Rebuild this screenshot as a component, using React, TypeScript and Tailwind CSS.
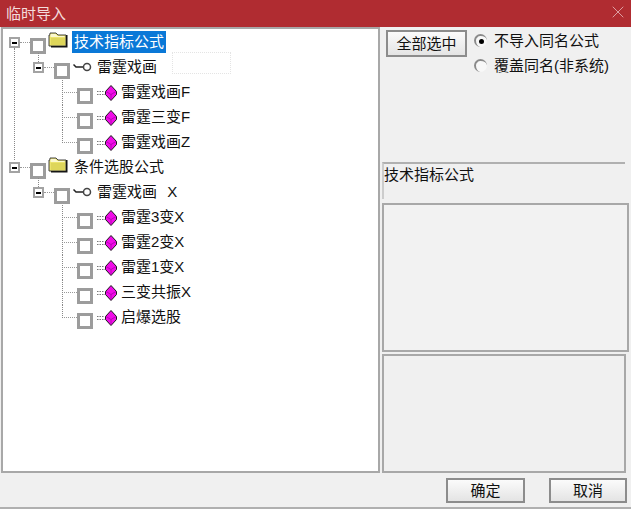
import { X } from "lucide-react"

const font = { fontFamily: '"Liberation Sans", "Noto Sans CJK SC", sans-serif' }

type Row = { level: 0 | 1 | 2; label: string; last?: boolean; selected?: boolean; editing?: boolean }

const rows: Row[] = [
  { level: 0, label: "技术指标公式", selected: true },
  { level: 1, label: "雷霆戏画", editing: true },
  { level: 2, label: "雷霆戏画F" },
  { level: 2, label: "雷霆三变F" },
  { level: 2, label: "雷霆戏画Z", last: true },
  { level: 0, label: "条件选股公式" },
  { level: 1, label: "雷霆戏画  X" },
  { level: 2, label: "雷霆3变X" },
  { level: 2, label: "雷霆2变X" },
  { level: 2, label: "雷霆1变X" },
  { level: 2, label: "三变共振X" },
  { level: 2, label: "启爆选股", last: true },
]

function Folder() {
  return (
    <svg width="20" height="18" viewBox="0 0 20 18" className="shrink-0">
      <path d="M1 15V4h1V2h6l2 2h8v11z" fill="#ece46c" stroke="#444" strokeWidth="1" />
      <path d="M2.500 3h5l2 2h7v1h-14z" fill="#fbf8d0" />
      <path d="M18 4h1.500v12.500H3V15h15z" fill="#151515" />
      <path d="M3 7h14v7H3z" fill="#ded65a" />
    </svg>
  )
}

function Key() {
  return (
    <svg width="19" height="12" viewBox="0 0 19 12" className="shrink-0">
      <path d="M0.500 3.500L3 6H10.500" stroke="#222" strokeWidth="1.5" fill="none" />
      <circle cx="14" cy="6" r="3.500" fill="#fff" stroke="#444" strokeWidth="1.500" />
    </svg>
  )
}

function Gem() {
  return (
    <svg width="22" height="16" viewBox="0 0 22 16" className="shrink-0">
      <path d="M1 6.500h7M1 9.500h8" stroke="#777" strokeWidth="1" strokeDasharray="1.500 1" />
      <path d="M15 0.500l5.500 6v3L15 15.500 9.500 9.500v-3z" fill="#f00ce8" stroke="#1a1a1a" strokeWidth="1" />
      <path d="M10 6.500l5 3 5-3M15 9.500v5.500" stroke="#a000a0" strokeWidth="0.7" fill="none" />
    </svg>
  )
}

function Expander() {
  return (
    <div className="w-[11px] h-[11px] border-2 border-[#a3a3a3] bg-white flex items-center justify-center shrink-0">
      <div className="w-[5px] h-[2px] bg-black" />
    </div>
  )
}

function Check() {
  return <div className="w-[16px] h-[16px] border-[3px] border-[#9c9c9c] bg-white shrink-0" />
}

function TreeRow({ row }: { row: Row }) {
  if (row.level === 0) {
    return (
      <div className="relative flex items-center h-[25px] pl-[6px]">
        <Expander />
        <div className="w-[10px] border-t border-dotted border-[#999]" />
        <div className="mt-[6px] shrink-0"><Check /></div>
        <div className="ml-[2px] -mt-[6px]"><Folder /></div>
        <span className={`ml-[4px] h-[22px] px-[2px] -mt-[1px] leading-[22px] text-[15px] ${row.selected ? "bg-[#0a78d7] text-white" : "text-[#111]"}`}>
          {row.label}
        </span>
        {row.selected ? <div className="absolute left-[11px] top-[18px] h-[112px] border-l border-dotted border-[#888]" /> : null}
        <div className="absolute left-[35px] top-[23px] h-[9px] border-l border-dotted border-[#888]" />
      </div>
    )
  }
  if (row.level === 1) {
    return (
      <div className="relative flex items-center h-[25px] pl-[30px]">
        <Expander />
        <div className="w-[10px] border-t border-dotted border-[#999]" />
        <div className="mt-[6px]"><Check /></div>
        <div className="ml-[3px] -mt-[2px]"><Key /></div>
        <span className="ml-[5px] -mt-[1px] text-[15px] text-[#111] whitespace-pre [word-spacing:1px] leading-[22px]">{row.label}</span>
        {row.editing ? <div className="absolute left-[169px] top-[-3px] w-[59px] h-[22px] border border-dotted border-[#e4e4e4]" /> : null}
      </div>
    )
  }
  return (
    <div className="relative flex items-center h-[25px] pl-[59px]">
      <div className={`absolute left-[59px] top-0 border-l border-dotted border-[#888] ${row.last ? "h-[13px]" : "h-[25px]"}`} />
      <div className="w-[15px] border-t border-dotted border-[#999]" />
      <div className="mt-[6px]"><Check /></div>
      <div className="ml-[3px]"><Gem /></div>
      <span className="ml-[3px] -mt-[1px] text-[15px] text-[#111] leading-[22px]">{row.label}</span>
    </div>
  )
}

function Radio({ on, label }: { on?: boolean; label: string }) {
  return (
    <div className="flex items-center h-[25px]">
      <div className="w-[13px] h-[13px] rounded-full border-l-2 border-t-2 border-[#8a8a8a] bg-[#f8f8f8] flex items-center justify-center shrink-0">
        {on ? <div className="w-[5px] h-[5px] rounded-full bg-black" /> : null}
      </div>
      <span className="ml-[7px] text-[15px] text-[#111] leading-[22px] whitespace-nowrap">{label}</span>
    </div>
  )
}

function Btn({ label, className }: { label: string; className: string }) {
  return (
    <button className={`border-2 border-[#8c8c8c] bg-gradient-to-b from-[#fbfbfb] to-[#e4e4e4] text-[15px] text-[#111] leading-none flex items-center justify-center ${className}`}>
      {label}
    </button>
  )
}

export default function App() {
  return (
    <div className="w-[631px] h-[509px] flex flex-col bg-[#f0f0f0] overflow-hidden" style={font}>
      <div className="h-[27px] bg-[#b02c31] flex items-center justify-between pl-[6px] pr-[3px] shrink-0">
        <span className="text-[15px] text-[#f4dcdc] leading-none">临时导入</span>
        <X size={20} strokeWidth={1} color="#e6b6b8" className="-mt-[3px]" />
      </div>
      <div className="h-[446px] flex shrink-0 pl-[1px]">
        <div className="w-[379px] h-full border-2 border-[#a8a8a8] bg-white pt-[1px] overflow-hidden shrink-0">
          {rows.map((row) => <TreeRow key={row.label} row={row} />)}
        </div>
        <div className="flex-1 pl-[2px] flex flex-col">
          <div className="flex h-[133px] pt-[3px] pl-[4px]">
            <Btn label="全部选中" className="w-[81px] h-[27px] shrink-0" />
            <div className="ml-[7px] -mt-[2px]">
              <Radio on label="不导入同名公式" />
              <Radio label="覆盖同名(非系统)" />
            </div>
          </div>
          <div className="h-[37px] w-[243px] border-t-2 border-l-2 border-t-[#b0b0b0] border-l-[#cccccc] text-[15px] leading-[20px] text-[#111] pt-[1px] mt-[2px]">
            技术指标公式
          </div>
          <div className="mt-[4px] h-[149px] w-[247px] border-2 border-[#a8a8a8] bg-[#f2f2f2]" />
          <div className="mt-[2px] h-[119px] w-[244px] border-2 border-[#a8a8a8] bg-[#f0f0f0]" />
        </div>
      </div>
      <div className="flex-1 flex justify-end gap-[24px] pt-[5px] pr-[4px] border-b-2 border-[#b0b0b0]">
        <Btn label="确定" className="w-[79px] h-[25px]" />
        <Btn label="取消" className="w-[78px] h-[25px]" />
      </div>
    </div>
  )
}
